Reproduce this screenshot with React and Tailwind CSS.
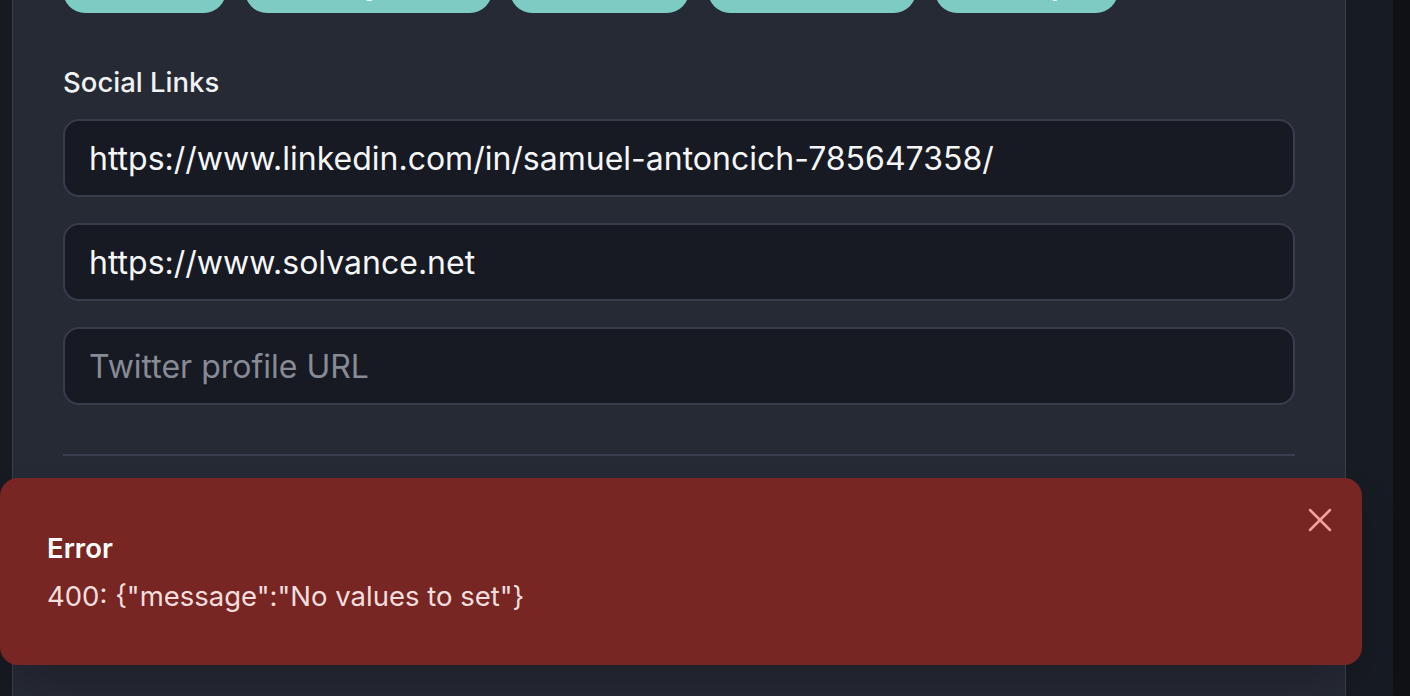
import { X } from 'lucide-react'

const tags = [
	{ label: 'Fintech', w: 'w-[163px]' },
	{ label: 'Consulting Services', w: 'w-[247px]' },
	{ label: 'Blockchain', w: 'w-[179px]' },
	{ label: 'Real Estate', w: 'w-[208px]' },
	{ label: 'Data Analytics', w: 'w-[183px]' },
]

const links = [
	{ value: 'https://www.linkedin.com/in/samuel-antoncich-785647358/', placeholder: 'LinkedIn profile URL' },
	{ value: 'https://www.solvance.net', placeholder: 'Website URL' },
	{ value: '', placeholder: 'Twitter profile URL' },
]

export default function App() {
	return (
		<div className="relative h-[696px] overflow-hidden bg-[#171a21] font-['Inter','Liberation_Sans',sans-serif]">
			<div className="flex h-full pl-[12px]">
				<div className="w-[1334px] shrink-0 border-x border-[#3a3f4c] bg-[#262a35] px-[50px]">
					<div className="-mt-[37px] flex gap-[18.7px]">
						{tags.map((t) => (
							<span
								key={t.label}
								className={`${t.w} flex h-[50px] shrink-0 items-center justify-center rounded-[22px] bg-[#7ecbc3] text-[22px] leading-none font-medium text-white`}
							>
								{t.label}
							</span>
						))}
					</div>

					<div className="mt-[51px] text-[27.5px] leading-[36px] font-medium text-[#f1f2f4]">Social Links</div>

					<div className="mt-[19px] flex flex-col gap-[26px]">
						{links.map((l) => (
							<input
								key={l.placeholder}
								readOnly
								value={l.value}
								placeholder={l.placeholder}
								className="h-[78px] w-full rounded-[16px] border-2 border-[#383d4b] bg-[#171a22] px-[24px] text-[32px] text-[#f5f6f8] outline-none placeholder:text-[#878b96]"
							/>
						))}
					</div>

					<div className="mt-[49px] h-[2px] bg-[#3a404f]" />
				</div>
				<div className="flex-1 bg-[#171b22]" />
				<div className="w-[17px] bg-[#101114]" />
			</div>

			<div className="absolute left-0 top-[478px] h-[187px] w-[1362px] rounded-[18px] bg-[#782624] px-[47px] pt-[52px] shadow-2xl">
				<div className="text-[27.5px] leading-[36px] font-semibold text-white">Error</div>
				<div className="mt-[12px] text-[27.5px] leading-[36px] text-[#f2dede]">400: {'{"message":"No values to set"}'}</div>
				<button className="absolute right-[22px] top-[22px] text-[#f3a39b]">
					<X size={40} strokeWidth={1.5} />
				</button>
			</div>
		</div>
	)
}
